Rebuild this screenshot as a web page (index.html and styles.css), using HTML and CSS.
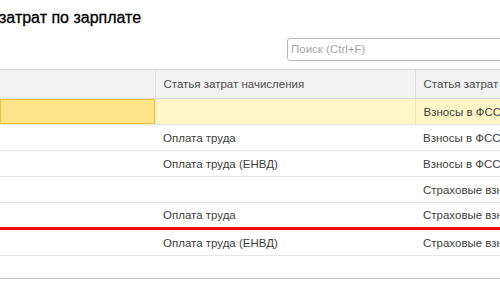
FILE: index.html
```html
<!DOCTYPE html>
<html lang="ru">
<head>
  <meta charset="UTF-8" />
  <title>Статьи затрат по зарплате</title>
  <link rel="stylesheet" href="styles.css">
</head>
<body>
  <h1 class="title">затрат по зарплате</h1>

  <div class="toolbar">
    <div class="search">Поиск (Ctrl+F)</div>
  </div>

  <table class="grid">
    <colgroup>
      <col class="col-name">
      <col class="col-accrual">
      <col class="col-tax">
    </colgroup>
    <thead>
      <tr>
        <th></th>
        <th>Статья затрат начисления</th>
        <th>Статья затрат взносов</th>
      </tr>
    </thead>
    <tbody>
      <tr class="selected">
        <td class="current"></td>
        <td></td>
        <td>Взносы в ФСС</td>
      </tr>
      <tr>
        <td></td>
        <td>Оплата труда</td>
        <td>Взносы в ФСС</td>
      </tr>
      <tr>
        <td></td>
        <td>Оплата труда (ЕНВД)</td>
        <td>Взносы в ФСС</td>
      </tr>
      <tr>
        <td></td>
        <td></td>
        <td>Страховые взносы</td>
      </tr>
      <tr class="marked">
        <td></td>
        <td>Оплата труда</td>
        <td>Страховые взносы</td>
      </tr>
      <tr>
        <td></td>
        <td>Оплата труда (ЕНВД)</td>
        <td>Страховые взносы</td>
      </tr>
      <tr class="filler">
        <td></td>
        <td></td>
        <td></td>
      </tr>
    </tbody>
  </table>
</body>
</html>
```

FILE: styles.css
```css
body {
  margin: 0;
  width: 500px;
  height: 300px;
  overflow: hidden;
  background: #fff;
  font-family: "Liberation Sans", Arial, sans-serif;
  color: #404040;
}
.title {
  margin: 0 0 0 -1px;
  padding: 9px 0 11px;
  font-size: 16px;
  line-height: 18px;
  font-weight: normal;
  color: #000;
  -webkit-text-stroke: 0.3px #000;
  white-space: nowrap;
}
.toolbar {
  display: flex;
  padding-left: 287px;
  height: 23px;
  margin-bottom: 8px;
}
.search {
  box-sizing: border-box;
  flex: 0 0 240px;
  height: 23px;
  border: 1px solid #b8b8b8;
  border-radius: 3px;
  padding: 0 3px;
  font-size: 11.5px;
  line-height: 21px;
  color: #a6a6a6;
}
.grid {
  width: 540px;
  border-collapse: collapse;
  table-layout: fixed;
  font-size: 11.5px;
  border-bottom: 1px solid #c6c6c6;
}
.col-name { width: 155px; }
.col-accrual { width: 260px; }
.grid th {
  height: 28px;
  padding: 0 8px;
  background: #f2f2f2;
  border-top: 1px solid #d6d6d6;
  border-bottom: 1px solid #dcdcdc;
  border-left: 1px solid #dcdcdc;
  text-align: left;
  font-weight: normal;
  color: #4d4d4d;
  white-space: nowrap;
  overflow: hidden;
}
.grid th:first-child {
  border-left: none;
}
.grid td {
  height: 25px;
  padding: 0 8px;
  border-bottom: 1px solid #e6e6e6;
  white-space: nowrap;
  overflow: hidden;
}
.selected td {
  background: #fff6c8;
  border-left: 1px solid #f2e7b8;
}
.selected td:first-child {
  border-left: none;
}
.selected td.current {
  background: #ffe48c;
  box-shadow: inset 0 0 0 1px #f5c32a;
}
.marked td {
  height: 24px;
  border-bottom: 3px solid #f00;
}
.filler td {
  height: 22px;
  border-bottom: none;
}
```
